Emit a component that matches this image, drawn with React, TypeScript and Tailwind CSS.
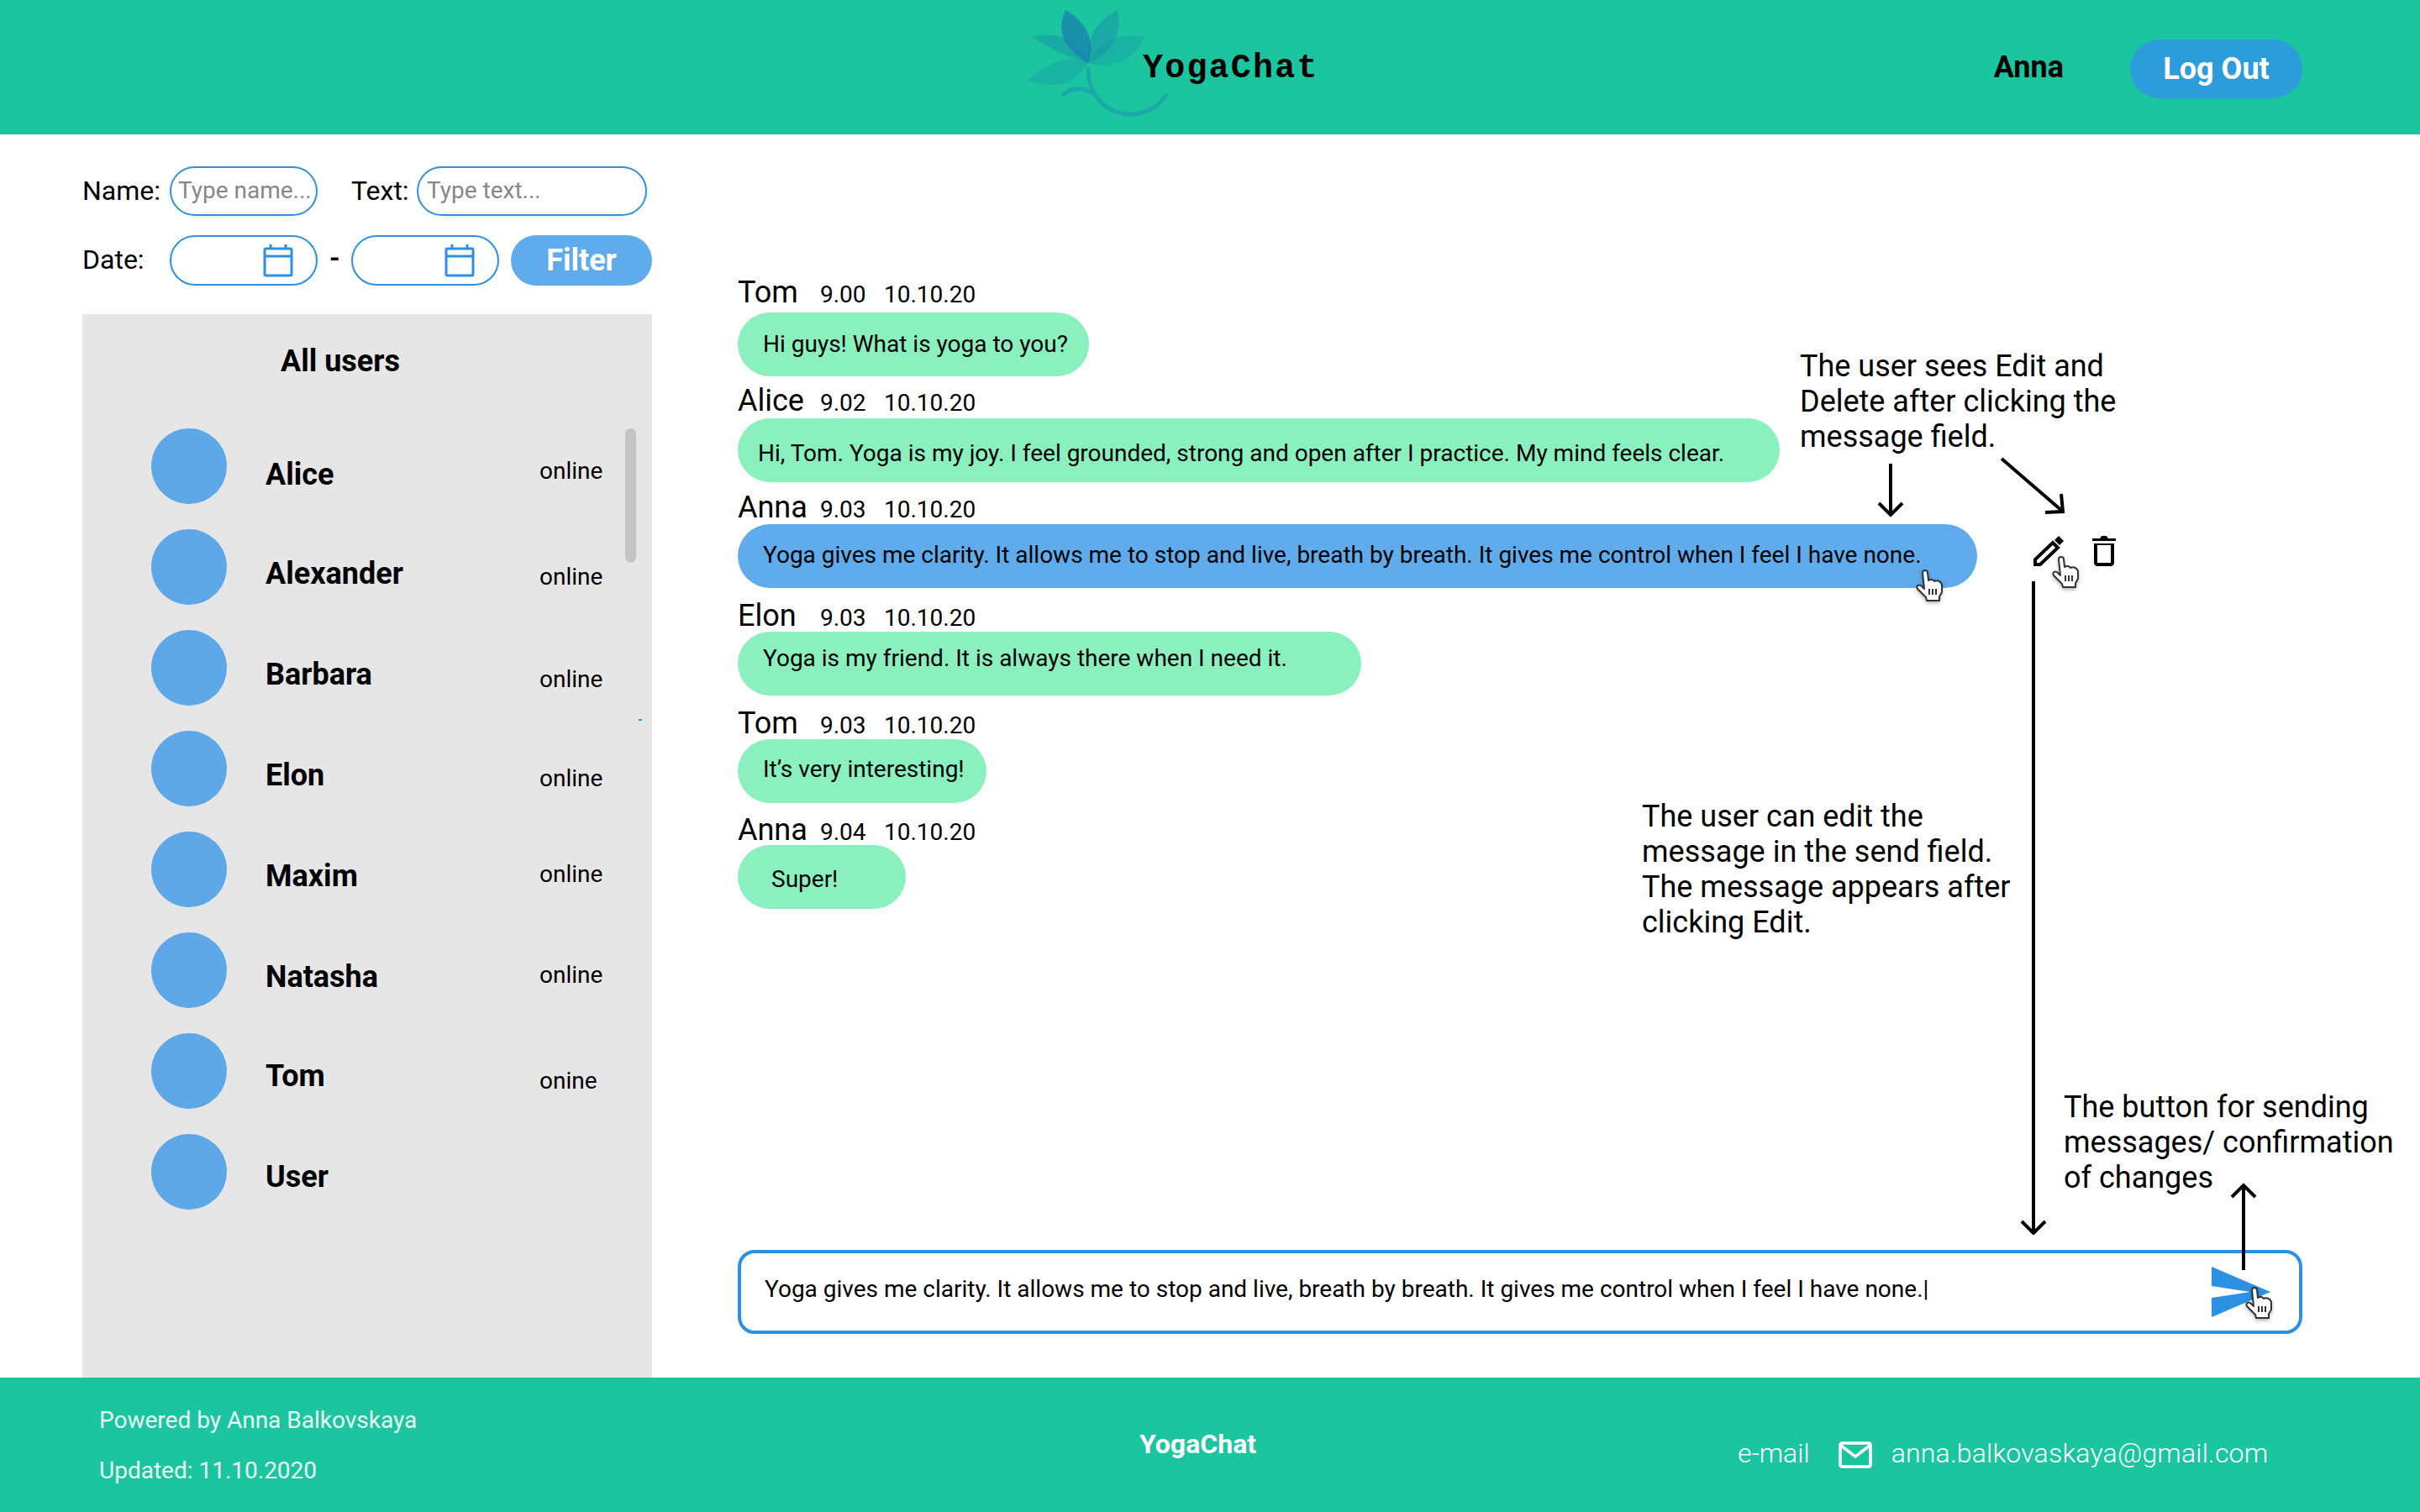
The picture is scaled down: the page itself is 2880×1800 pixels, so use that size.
import React from 'react';

const users = [
  { name: 'Alice', nameClass: 'mt-[32px]', status: 'online', statusClass: 'mt-[35px]' },
  { name: 'Alexander', nameClass: 'mt-[30px]', status: 'online', statusClass: 'mt-[41px]' },
  { name: 'Barbara', nameClass: 'mt-[30px]', status: 'online', statusClass: 'mt-[43px]' },
  { name: 'Elon', nameClass: 'mt-[30px]', status: 'online', statusClass: 'mt-[41px]' },
  { name: 'Maxim', nameClass: 'mt-[30px]', status: 'online', statusClass: 'mt-[35px]' },
  { name: 'Natasha', nameClass: 'mt-[30px]', status: 'online', statusClass: 'mt-[35px]' },
  { name: 'Tom', nameClass: 'mt-[28px]', status: 'onine', statusClass: 'mt-[41px]' },
  { name: 'User', nameClass: 'mt-[28px]', status: '', statusClass: '' },
];

const messages = [
  { name: 'Tom', time: '9.00', text: 'Hi guys! What is yoga to you?', label: 'h-[50px] pt-[8px]', box: 'w-[418px] pl-[30px] bg-[#89F0BE]' },
  { name: 'Alice', time: '9.02', text: 'Hi, Tom. Yoga is my joy. I feel grounded, strong and open after I practice. My mind feels clear.', label: 'h-[50px] pt-[11px]', box: 'w-[1240px] pl-[24px] pt-[8px] bg-[#89F0BE]' },
  { name: 'Anna', time: '9.03', text: 'Yoga gives me clarity. It allows me to stop and live, breath by breath. It gives me control when I feel I have none.', label: 'h-[50px] pt-[12px]', box: 'w-[1475px] pl-[30px] pb-[2px] bg-[#5FABEB]' },
  { name: 'Elon', time: '9.03', text: 'Yoga is my friend. It is always there when I need it.', label: 'h-[52px] pt-[15px]', box: 'w-[742px] pl-[30px] pb-[12px] bg-[#89F0BE]' },
  { name: 'Tom', time: '9.03', text: 'It’s very interesting!', label: 'h-[52px] pt-[15px]', box: 'w-[296px] pl-[30px] pb-[5px] bg-[#89F0BE]' },
  { name: 'Anna', time: '9.04', text: 'Super!', label: 'h-[50px] pt-[14px]', box: 'w-[200px] pl-[40px] pt-[6px] bg-[#89F0BE]' },
];

const Calendar = () => (
  <svg width="36" height="40" viewBox="0 0 36 40" fill="none" stroke="#2D91E3" strokeWidth="3" className="shrink-0">
    <rect x="2" y="6" width="32" height="32" rx="1.5" />
    <path d="M2 15h32M9 1v5M27 1v5" />
  </svg>
);

const Hand = ({ className }: { className: string }) => (
  <svg width="33" height="39" viewBox="0 0 33 39" className={`absolute drop-shadow-[0_2px_2px_rgba(0,0,0,0.3)] ${className}`}>
    <path d="M8 4C8 0 14 0 14 4L15 13C18 11 21 12 22 14C25 12 30 14 31 18L31 27L28 32L28 37L13 37L12 33L2 23C0 19 4 17 7 20L10 23Z" fill="#fff" stroke="#333" strokeWidth="2" strokeLinejoin="round" />
    <path d="M16 23v7M20 23v7M24 23v7" stroke="#333" strokeWidth="2" />
  </svg>
);

const Arrow = ({ className, width, height, d }: { className: string; width: number; height: number; d: string }) => (
  <svg width={width} height={height} viewBox={`0 0 ${width} ${height}`} fill="none" stroke="#000" strokeWidth="4" className={`absolute ${className}`}>
    <path d={d} />
  </svg>
);

const Logo = () => (
  <svg width="170" height="140" viewBox="0 0 170 140" className="absolute left-[-140px] top-[-62px]">
    <g fill="#1B7FB0">
      <path d="M75 75C50 68 25 55 8 44C30 38 62 42 75 75Z" opacity="0.4" />
      <path d="M75 75C72 45 85 25 110 12C116 40 105 62 75 75Z" opacity="0.4" />
      <path d="M75 75C88 48 115 38 143 44C130 72 100 84 75 75Z" opacity="0.25" />
      <path d="M75 75C50 62 25 78 2 95C25 105 58 105 75 75Z" opacity="0.25" />
      <path d="M75 75C50 60 35 40 48 12C72 25 85 50 75 75Z" opacity="0.75" />
    </g>
    <path d="M75 82C75 112 95 136 127 136C145 136 160 125 168 113M79 110C65 104 55 104 46 112" fill="none" stroke="#1AA9A8" strokeWidth="5" strokeLinecap="round" />
  </svg>
);

const Note = ({ className, lines }: { className: string; lines: string[] }) => (
  <div className={`absolute text-[36px] leading-[42px] text-black ${className}`}>
    {lines.map((line) => (
      <div key={line}>{line}</div>
    ))}
  </div>
);

export default function App() {
  return (
    <div className="relative w-[2880px] h-[1800px] bg-white overflow-hidden font-['Roboto',sans-serif]">
      <header className="h-[160px] bg-[#1AC59F] flex items-center justify-end relative">
        <div className="absolute left-[1360px] top-[62px]">
          <Logo />
          <span className="relative text-[40px] leading-[40px] tracking-[2.2px] font-bold text-black font-['Liberation_Mono',monospace]">YogaChat</span>
        </div>
        <span className="text-[36px] font-bold text-black mr-[79px]">Anna</span>
        <button className="w-[205px] h-[70px] mt-[4px] mr-[140px] rounded-full bg-[#2D9CDB] text-white text-[36px] font-bold">Log Out</button>
      </header>

      <main className="flex h-[1480px]">
        <section className="w-[678px] ml-[98px] pt-[38px] flex flex-col shrink-0">
          <div className="flex items-center h-[59px] text-[32px] text-black">
            <span className="w-[104px] -mt-[2px]">Name:</span>
            <div className="w-[176px] h-[59px] border-2 border-[#2D91E3] rounded-full flex items-center pl-[8px] pb-[2px] text-[28px] text-[#8C8585] whitespace-nowrap overflow-hidden">Type name...</div>
            <span className="ml-[40px] w-[78px] -mt-[2px]">Text:</span>
            <div className="w-[274px] h-[59px] border-2 border-[#2D91E3] rounded-full flex items-center pl-[10px] pb-[2px] text-[28px] text-[#8C8585]">Type text...</div>
          </div>
          <div className="flex items-center h-[60px] mt-[23px] text-[32px] text-black">
            <span className="w-[104px] -mt-[2px]">Date:</span>
            <div className="w-[176px] h-[60px] border-2 border-[#2D91E3] rounded-full flex items-center justify-end pr-[27px]"><Calendar /></div>
            <span className="w-[40px] pl-[14px] font-bold -mt-[6px]">-</span>
            <div className="w-[176px] h-[60px] border-2 border-[#2D91E3] rounded-full flex items-center justify-end pr-[27px]"><Calendar /></div>
            <button className="w-[168px] h-[60px] ml-[14px] rounded-full bg-[#5FABEB] text-white text-[36px] font-bold">Filter</button>
          </div>
          <div className="relative mt-[34px] h-[1266px] bg-[#E6E6E6]">
            <h2 className="pl-[236px] pt-[33px] text-[36px] leading-[46px] font-bold text-black">All users</h2>
            <div className="absolute right-[19px] top-[136px] w-[13px] h-[160px] rounded-full bg-[#C4C4C4]" />
            <div className="absolute left-[662px] top-[482px] w-[4px] h-[2px] bg-[#2D91E3]" />
            <ul className="mt-[57px] pl-[82px] flex flex-col gap-[30px]">
              {users.map((user) => (
                <li key={user.name} className="flex h-[90px]">
                  <div className="w-[90px] h-[90px] rounded-full bg-[#5FA8E8] shrink-0" />
                  <span className={`ml-[46px] w-[326px] text-[36px] leading-[46px] font-bold text-black ${user.nameClass}`}>{user.name}</span>
                  {user.status && <span className={`text-[28px] leading-[32px] text-black ${user.statusClass}`}>{user.status}</span>}
                </li>
              ))}
            </ul>
          </div>
        </section>

        <section className="ml-[102px] w-[1862px] pt-[162px] flex flex-col text-black">
          <div className="flex flex-col">
            {messages.map((message, i) => (
              <div key={i}>
                <div className={`flex items-baseline leading-[36px] ${message.label}`}>
                  <span className="w-[98px] text-[36px]">{message.name}</span>
                  <span className="w-[76px] text-[28px]">{message.time}</span>
                  <span className="text-[28px]">10.10.20</span>
                </div>
                <div className={`h-[76px] rounded-full flex items-center text-[28px] whitespace-nowrap ${message.box}`}>{message.text}</div>
              </div>
            ))}
          </div>
          <div className="mt-auto mb-[52px] h-[100px] border-[4px] border-[#2D91E3] rounded-[20px] flex items-center pl-[28px] pr-[34px] text-[28px]">
            <span className="-mt-[6px]">Yoga gives me clarity. It allows me to stop and live, breath by breath. It gives me control when I feel I have none.|</span>
            <svg width="70" height="60" viewBox="0 0 70 60" className="ml-auto">
              <path d="M0 0L70 30L0 60V37L46 30L0 23Z" fill="#2D91E3" />
            </svg>
          </div>
        </section>
      </main>

      <footer className="absolute left-0 bottom-0 w-full h-[160px] bg-[#1AC59F] text-white flex">
        <div className="ml-[118px] w-[1238px] pt-[21px] text-[28px] leading-[60px] text-[#E9F8F4] shrink-0">
          <div>Powered by Anna Balkovskaya</div>
          <div>Updated: 11.10.2020</div>
        </div>
        <div className="w-[712px] pt-[60px] text-[32px] leading-[38px] font-bold shrink-0">YogaChat</div>
        <div className="flex items-center h-[32px] mt-[76px] text-[32px] font-light">
          <span className="-mt-[4px]">e-mail</span>
          <svg width="40" height="32" viewBox="0 0 40 32" fill="none" stroke="#fff" strokeWidth="3.5" className="ml-[34px]">
            <rect x="2" y="2" width="36" height="28" rx="2" />
            <path d="M3 5l17 13L37 5" />
          </svg>
          <span className="ml-[23px] -mt-[4px] tracking-[0.2px]">anna.balkovaskaya@gmail.com</span>
        </div>
      </footer>

      <Note className="left-[2142px] top-[415px]" lines={['The user sees Edit and', 'Delete after clicking the', 'message field.']} />
      <Note className="left-[1954px] top-[951px]" lines={['The user can edit the', 'message in the send field.', 'The message appears after', 'clicking Edit.']} />
      <Note className="left-[2456px] top-[1297px]" lines={['The button for sending', 'messages/ confirmation', 'of changes']} />

      <Arrow className="left-[2234px] top-[550px]" width={32} height={66} d="M16 2V63M2 49L16 63L30 49" />
      <Arrow className="left-[2378px] top-[543px]" width={82} height={70} d="M4 3L77 66M56 67L77 66L75 45" />
      <Arrow className="left-[2404px] top-[692px]" width={32} height={778} d="M16 0V776M2 762L16 776L30 762" />
      <Arrow className="left-[2654px] top-[1408px]" width={32} height={104} d="M16 104V3M2 17L16 3L30 17" />

      <svg width="36" height="36" viewBox="0 0 36 36" className="absolute left-[2420px] top-[638px]">
        <path d="M2 34V28L23 8L29 14L8 34Z" fill="none" stroke="#000" strokeWidth="4" />
        <path d="M0 36V29L7 36Z" fill="#000" />
        <path d="M25 5L30 0L36 6L31 11Z" fill="#000" />
      </svg>
      <svg width="28" height="36" viewBox="0 0 28 36" className="absolute left-[2490px] top-[638px]">
        <path d="M0 3H9L11 0H17L19 3H28V6H0ZM2 9H26V32C26 34 24 36 22 36H6C4 36 2 34 2 32ZM6 11V32H22V11Z" fill="#000" fillRule="evenodd" />
      </svg>

      <Hand className="left-[2280px] top-[678px]" />
      <Hand className="left-[2442px] top-[662px]" />
      <Hand className="left-[2672px] top-[1532px]" />
    </div>
  );
}
